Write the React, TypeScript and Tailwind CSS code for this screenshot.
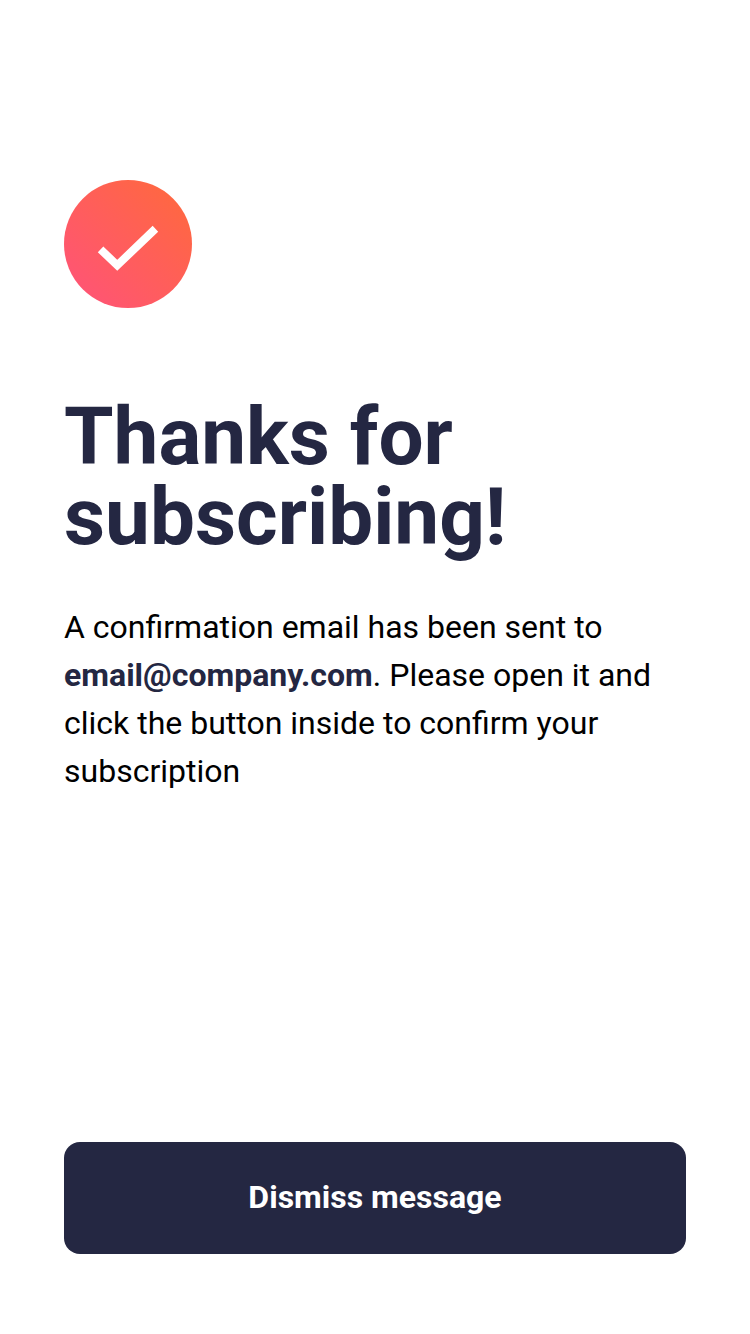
export default function App() {
  return (
    <main className="flex h-[1334px] w-[750px] flex-col bg-white px-16 pt-[180px] pb-20 font-['Roboto',sans-serif]">
      <svg className="size-32 shrink-0" viewBox="0 0 64 64" fill="none" aria-hidden="true">
        <defs>
          <linearGradient id="success" x1="100%" x2="0%" y1="0%" y2="100%">
            <stop offset="0%" stopColor="#FF6A3A" />
            <stop offset="100%" stopColor="#FF527B" />
          </linearGradient>
        </defs>
        <circle cx="32" cy="32" r="32" fill="url(#success)" />
        <path stroke="#fff" strokeWidth="4" d="m18.286 34.686 8.334 7.98 19.094-18.285" />
      </svg>
      <h1 className="mt-[89px] text-[80px] leading-[80px] font-bold text-[#242742]">
        Thanks for
        <br />
        subscribing!
      </h1>
      <p className="mt-[46px] text-[32px] leading-[48px] text-black">
        A confirmation email has been sent to <strong className="font-bold text-[#242742]">email@company.com</strong>. Please open it and click the button inside to confirm your subscription
      </p>
      <button type="button" className="mt-auto h-28 w-full rounded-2xl bg-[#242742] pb-0.5 text-[32px] leading-[48px] font-bold text-white">
        Dismiss message
      </button>
    </main>
  );
}
